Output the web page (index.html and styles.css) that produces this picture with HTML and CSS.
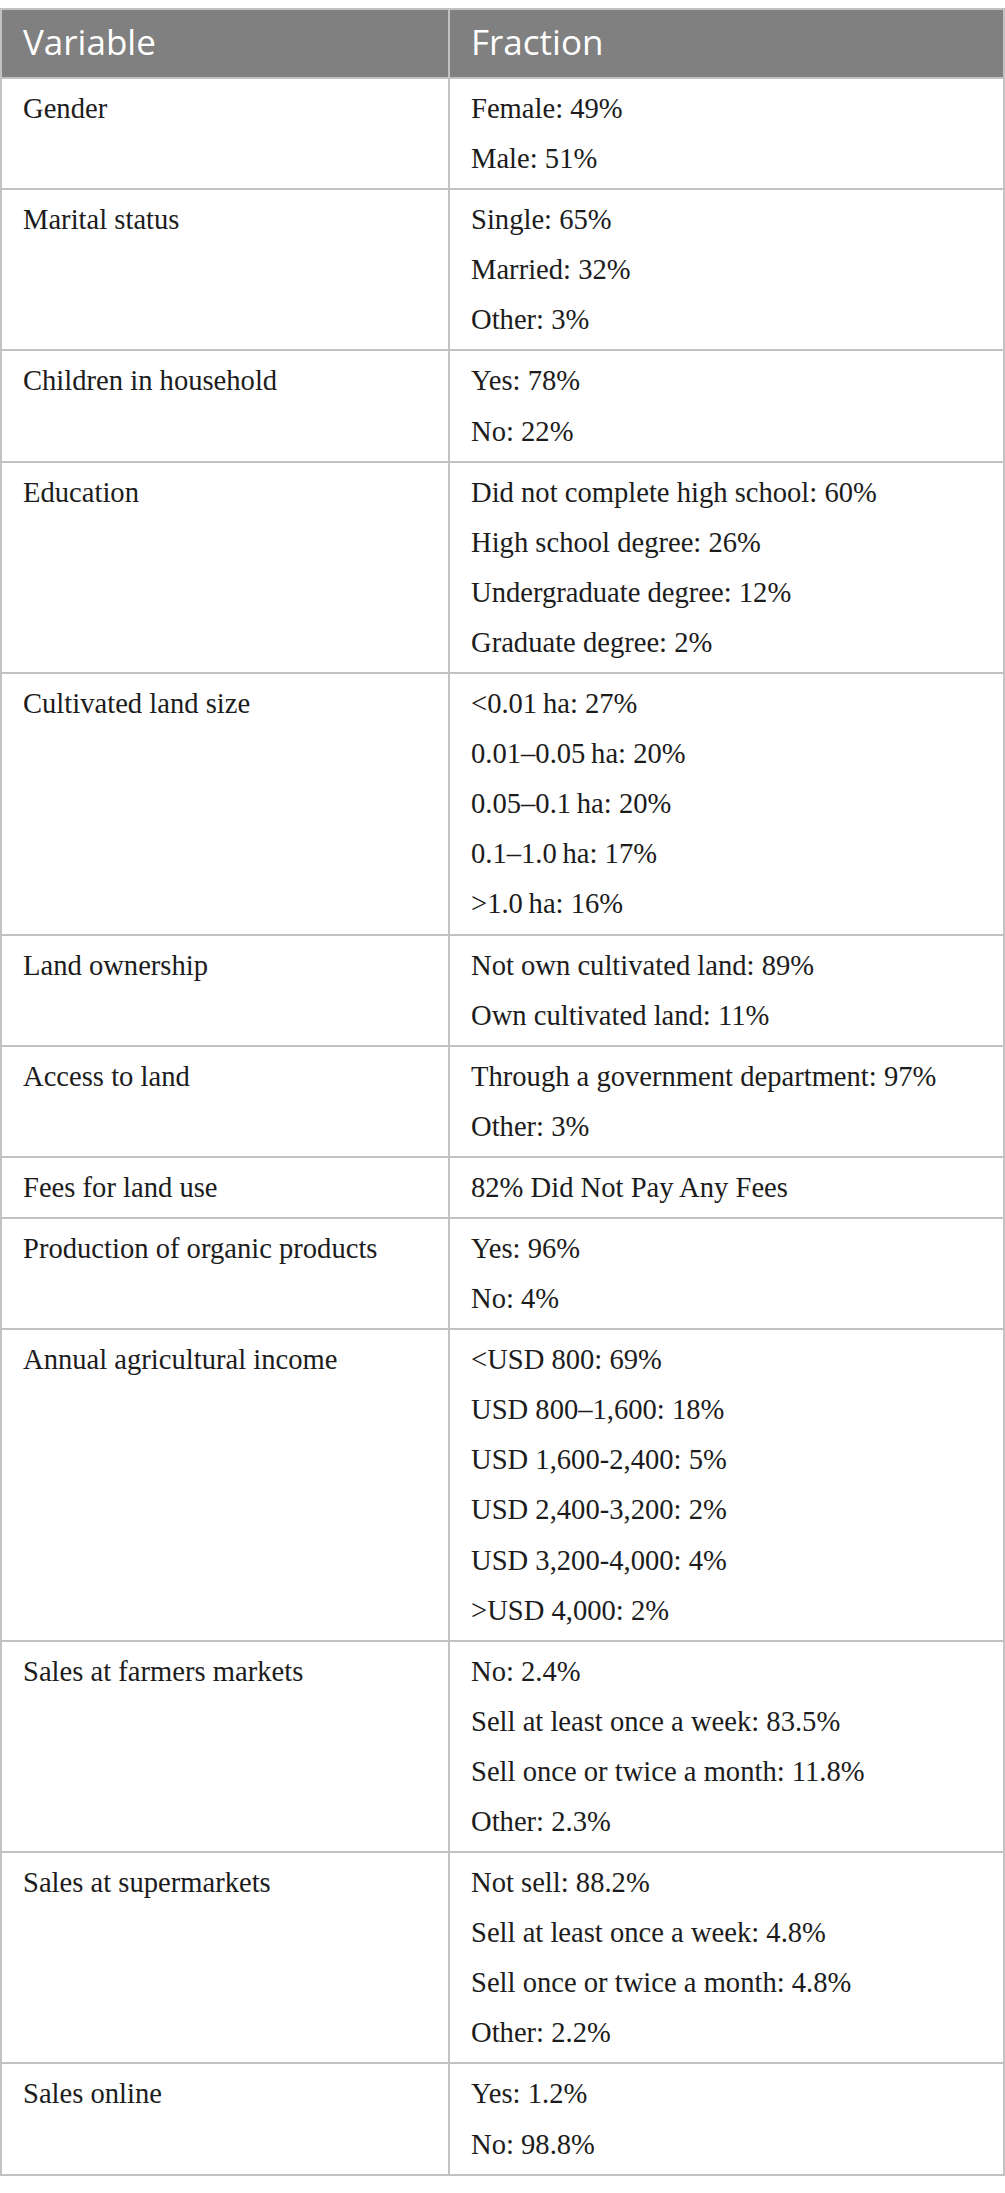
FILE: index.html
```html
<!DOCTYPE html>
<html lang="en">
<head>
<meta charset="utf-8">
<title>Table</title>
<link rel="stylesheet" href="styles.css">
</head>
<body>
<table class="data">
  <colgroup><col class="c1"><col class="c2"></colgroup>
  <thead>
    <tr><th>Variable</th><th>Fraction</th></tr>
  </thead>
  <tbody>
    <tr><td><div class="ln">Gender</div></td><td><div class="ln">Female: 49%</div><div class="ln">Male: 51%</div></td></tr>
    <tr><td><div class="ln">Marital status</div></td><td><div class="ln">Single: 65%</div><div class="ln">Married: 32%</div><div class="ln">Other: 3%</div></td></tr>
    <tr><td><div class="ln">Children in household</div></td><td><div class="ln">Yes: 78%</div><div class="ln">No: 22%</div></td></tr>
    <tr><td><div class="ln">Education</div></td><td><div class="ln">Did not complete high school: 60%</div><div class="ln">High school degree: 26%</div><div class="ln">Undergraduate degree: 12%</div><div class="ln">Graduate degree: 2%</div></td></tr>
    <tr><td><div class="ln">Cultivated land size</div></td><td><div class="ln">&lt;0.01&#8201;ha: 27%</div><div class="ln">0.01&#8211;0.05&#8201;ha: 20%</div><div class="ln">0.05&#8211;0.1&#8201;ha: 20%</div><div class="ln">0.1&#8211;1.0&#8201;ha: 17%</div><div class="ln">&gt;1.0&#8201;ha: 16%</div></td></tr>
    <tr><td><div class="ln">Land ownership</div></td><td><div class="ln">Not own cultivated land: 89%</div><div class="ln">Own cultivated land: 11%</div></td></tr>
    <tr><td><div class="ln">Access to land</div></td><td><div class="ln">Through a government department: 97%</div><div class="ln">Other: 3%</div></td></tr>
    <tr><td><div class="ln">Fees for land use</div></td><td><div class="ln">82% Did Not Pay Any Fees</div></td></tr>
    <tr><td><div class="ln">Production of organic products</div></td><td><div class="ln">Yes: 96%</div><div class="ln">No: 4%</div></td></tr>
    <tr><td><div class="ln">Annual agricultural income</div></td><td><div class="ln">&lt;USD 800: 69%</div><div class="ln">USD 800&#8211;1,600: 18%</div><div class="ln">USD 1,600-2,400: 5%</div><div class="ln">USD 2,400-3,200: 2%</div><div class="ln">USD 3,200-4,000: 4%</div><div class="ln">&gt;USD 4,000: 2%</div></td></tr>
    <tr><td><div class="ln">Sales at farmers markets</div></td><td><div class="ln">No: 2.4%</div><div class="ln">Sell at least once a week: 83.5%</div><div class="ln">Sell once or twice a month: 11.8%</div><div class="ln">Other: 2.3%</div></td></tr>
    <tr><td><div class="ln">Sales at supermarkets</div></td><td><div class="ln">Not sell: 88.2%</div><div class="ln">Sell at least once a week: 4.8%</div><div class="ln">Sell once or twice a month: 4.8%</div><div class="ln">Other: 2.2%</div></td></tr>
    <tr><td><div class="ln">Sales online</div></td><td><div class="ln">Yes: 1.2%</div><div class="ln">No: 98.8%</div></td></tr>
  </tbody>
</table>
</body>
</html>
```

FILE: styles.css
```css
html, body {
  background: #ffffff;
}
body {
  margin: 8px 0 0 0;
}
.data {
  width: 100%;
  border-collapse: collapse;
  table-layout: fixed;
}
.c1 {
  width: 448px;
}
.data th,
.data td {
  border: 2px solid #c2c2c2;
  text-align: left;
  vertical-align: top;
}
.data th {
  background: #808080;
  color: #ffffff;
  font-family: "Open Sans", "Noto Sans", sans-serif;
  font-weight: 400;
  font-size: 35px;
  line-height: 50px;
  padding: 7px 20px 10px 21px;
}
.data td {
  color: #1c1c1c;
  font-family: "Liberation Serif", "Times New Roman", serif;
  font-size: 28.6px;
  line-height: 50.1px;
  padding: 5px 20px 4px 21px;
}
.ln {
  white-space: nowrap;
}
```
